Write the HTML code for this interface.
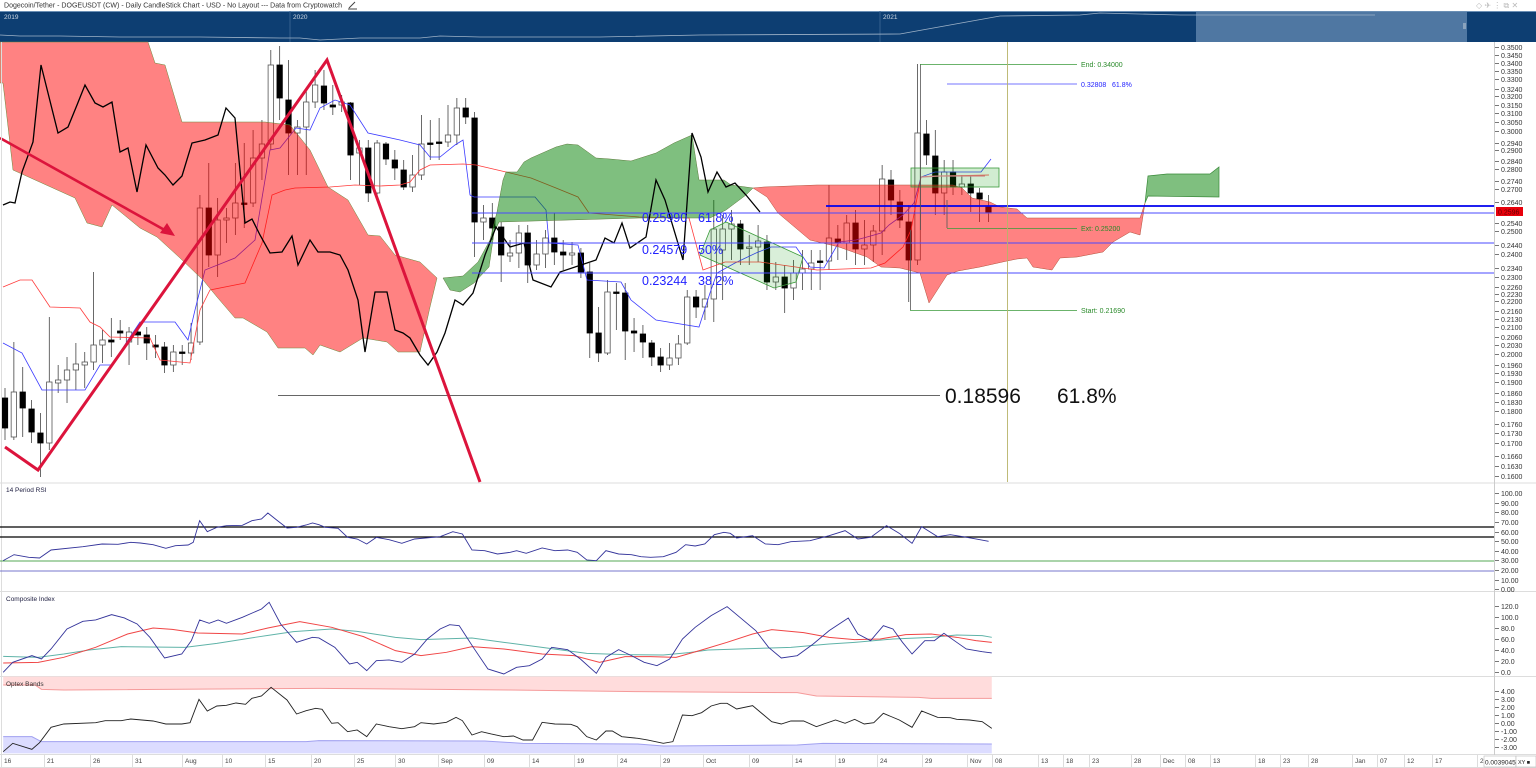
<!DOCTYPE html>
<html><head><meta charset="utf-8">
<style>
html,body{margin:0;padding:0;background:#fff;width:1536px;height:768px;overflow:hidden;font-family:"Liberation Sans",sans-serif;}
svg{position:absolute;left:0;top:0}
text{font-family:"Liberation Sans",sans-serif}
</style></head><body>
<svg id="s" width="1536" height="768" viewBox="0 0 1536 768" xmlns="http://www.w3.org/2000/svg">
<rect width="1536" height="768" fill="#fff"/>
<!-- title -->
<text x="4" y="7.5" font-size="7" fill="#333" textLength="338">Dogecoin/Tether - DOGEUSDT (CW) - Daily CandleStick Chart - USD - No Layout --- Data from Cryptowatch</text>
<path d="M349 8 L355 2 M348 9 L357 9" stroke="#444" stroke-width="1" fill="none"/>
<text x="1476" y="8" font-size="8" fill="#bbb">◇ ✈ ⋮ ⧉ ✕</text>
<!-- navigator -->
<rect x="0" y="11" width="1536" height="31" fill="#0d3e72"/>
<rect x="1196" y="11" width="271" height="31" fill="#4f77a2"/>
<line x1="0" y1="11.5" x2="1536" y2="11.5" stroke="#6a8fb5" stroke-width="1"/>
<line x1="290" y1="11" x2="290" y2="42" stroke="#35608e"/>
<line x1="880" y1="11" x2="880" y2="42" stroke="#35608e"/>
<text x="4" y="19" font-size="6.5" fill="#cfd8e3">2019</text>
<text x="293" y="19" font-size="6.5" fill="#cfd8e3">2020</text>
<text x="883" y="19" font-size="6.5" fill="#cfd8e3">2021</text>
<polyline fill="none" stroke="#9fb3c8" stroke-width="0.8" points="0,35 20,36 60,36 120,37 200,37 280,38 300,38 320,40 360,38 420,38 440,36 480,37 600,37 700,35 900,34 1000,16 1080,15 1100,13 1180,15 1250,15 1375,15"/>
<rect x="1463" y="23" width="3" height="6" fill="#8aa3bd"/>

<g id="main"></g>

<!-- panel separators -->
<line x1="0" y1="483" x2="1536" y2="483" stroke="#ddd"/>
<line x1="0" y1="591.5" x2="1536" y2="591.5" stroke="#ddd"/>
<line x1="0" y1="676.5" x2="1536" y2="676.5" stroke="#ddd"/>
<line x1="0" y1="754.5" x2="1536" y2="754.5" stroke="#ddd"/>
<line x1="1494.5" y1="42" x2="1494.5" y2="755" stroke="#ccc"/>
<line x1="1.5" y1="42" x2="1.5" y2="755" stroke="#ddd"/>

<!-- RSI -->
<text x="6" y="492" font-size="6.5" fill="#224">14 Period RSI</text>
<line x1="0" y1="527" x2="1494" y2="527" stroke="#000" stroke-width="1.2"/>
<line x1="0" y1="537" x2="1494" y2="537" stroke="#000" stroke-width="1.2"/>
<line x1="0" y1="561" x2="1494" y2="561" stroke="#5a5" stroke-width="1"/>
<line x1="0" y1="571" x2="1494" y2="571" stroke="#77c" stroke-width="1"/>
<g transform="translate(0,484) scale(0.6378,0.3333)">
<polyline vector-effect="non-scaling-stroke" fill="none" stroke="#33339a" stroke-width="0.9" points="5,230 22,212 45,220 62,222 80,198 130,188 160,180 185,181 205,175 220,177 240,182 260,193 275,185 295,183 303,175 313,110 325,143 340,130 355,125 380,124 395,110 410,105 420,87 435,110 450,132 465,130 480,123 490,117 500,122 510,130 530,133 545,160 560,165 575,180 590,160 610,167 630,178 650,165 690,158 710,143 725,150 740,198 760,200 780,210 800,205 810,200 825,208 850,192 870,200 890,198 905,205 920,228 935,230 950,200 970,210 990,212 1005,218 1020,220 1040,218 1060,205 1075,182 1090,186 1105,180 1120,152 1135,145 1145,148 1155,162 1180,155 1200,180 1220,182 1240,173 1270,170 1300,155 1325,140 1345,165 1365,160 1390,125 1410,148 1430,178 1445,128 1470,158 1490,152 1510,158 1530,165 1550,172"/>
</g>
<!-- Composite -->
<text x="6" y="601" font-size="6.5" fill="#224">Composite Index</text>
<g transform="translate(0,484) scale(0.6378,0.3333)">
<polyline vector-effect="non-scaling-stroke" fill="none" stroke="#5fb3a8" stroke-width="1" points="5,517 60,520 100,510 140,498 190,488 290,490 340,478 400,460 460,443 520,435 560,442 620,460 660,467 740,462 790,475 850,490 920,508 980,512 1040,513 1080,506 1110,498 1190,493 1240,490 1300,480 1340,475 1400,465 1460,460 1500,453 1540,455 1555,460"/>
<polyline vector-effect="non-scaling-stroke" fill="none" stroke="#f04545" stroke-width="1" points="5,537 60,535 100,520 150,490 200,450 240,432 270,436 310,447 380,450 420,432 470,413 520,430 570,458 620,500 660,515 700,505 740,488 790,495 850,510 900,515 940,535 980,518 1020,518 1060,520 1100,498 1140,475 1180,450 1210,437 1260,446 1300,460 1340,467 1380,465 1420,452 1460,450 1500,460 1530,470 1555,475"/>
<polyline vector-effect="non-scaling-stroke" fill="none" stroke="#33339a" stroke-width="0.9" points="5,565 20,535 50,515 65,525 80,495 105,435 130,412 150,408 175,392 195,402 215,420 235,460 258,522 285,510 300,470 313,408 328,418 342,408 355,418 380,400 410,375 422,355 440,420 465,475 490,460 500,462 525,490 548,540 560,535 575,560 590,530 610,528 630,535 650,510 670,465 690,435 705,422 720,425 742,490 765,555 790,570 810,550 830,545 850,525 865,490 890,497 910,525 935,568 950,520 970,497 990,515 1010,535 1030,545 1050,525 1070,465 1090,430 1115,395 1140,368 1160,400 1185,440 1205,490 1225,522 1250,515 1275,480 1300,440 1330,402 1345,450 1365,470 1385,425 1400,435 1415,475 1430,510 1450,470 1465,470 1480,448 1500,475 1515,495 1540,503 1555,507"/>
</g>
<!-- Optex -->
<g transform="translate(0,670) scale(0.6378,0.3333)">
<polygon fill="#ffdcdc" points="5,20 1555,20 1555,85 1460,85 1440,82 1280,78 1250,68 1000,65 800,60 500,55 100,60 65,58 55,45 5,45"/>
<polyline vector-effect="non-scaling-stroke" fill="none" stroke="#f59a9a" stroke-width="1" points="5,45 55,45 65,58 100,60 500,55 800,60 1000,65 1250,68 1280,78 1440,82 1460,85 1555,85"/>
<polygon fill="#dcdcff" points="5,200 50,200 65,215 480,215 500,212 760,213 820,220 1000,222 1040,228 1250,225 1290,220 1555,222 1555,250 5,250"/>
<polyline vector-effect="non-scaling-stroke" fill="none" stroke="#a0a0f0" stroke-width="1" points="5,200 50,200 65,215 480,215 500,212 760,213 820,220 1000,222 1040,228 1250,225 1290,220 1555,222"/>
<polyline vector-effect="non-scaling-stroke" fill="none" stroke="#222" stroke-width="0.9" points="5,245 20,220 50,238 62,218 80,172 100,162 150,158 165,152 190,152 205,147 240,153 260,162 285,162 298,158 312,88 325,123 340,108 355,106 370,99 385,103 395,85 410,78 425,52 450,90 465,132 480,122 495,115 505,118 520,160 530,158 545,185 560,180 575,200 590,162 610,170 630,176 650,170 660,158 680,162 700,157 715,142 725,152 740,195 755,185 770,192 790,200 805,198 820,210 835,210 850,157 870,162 895,163 905,170 920,200 935,210 950,183 960,183 975,200 1000,205 1015,210 1040,220 1055,215 1070,135 1085,137 1100,128 1115,108 1130,100 1140,100 1155,117 1180,107 1210,155 1225,162 1240,153 1260,153 1280,170 1310,150 1325,160 1340,148 1355,162 1370,158 1385,130 1410,150 1430,172 1445,123 1470,142 1490,143 1500,148 1520,150 1540,155 1555,175"/>
</g>
<text x="6" y="686" font-size="6.5" fill="#333">Optex Bands</text>

<!-- right axis -->
<g font-size="7" fill="#333" stroke="none" id="axis">
<text x="1501" y="50">0.3500</text><text x="1501" y="58">0.3450</text><text x="1501" y="66">0.3400</text><text x="1501" y="74">0.3350</text><text x="1501" y="82">0.3300</text><text x="1501" y="92">0.3240</text><text x="1501" y="99">0.3200</text><text x="1501" y="108">0.3150</text><text x="1501" y="116">0.3100</text><text x="1501" y="125">0.3050</text><text x="1501" y="134">0.3000</text><text x="1501" y="146">0.2940</text><text x="1501" y="153">0.2900</text><text x="1501" y="164">0.2840</text><text x="1501" y="172">0.2800</text><text x="1501" y="184">0.2740</text><text x="1501" y="192">0.2700</text><text x="1501" y="205">0.2640</text><text x="1501" y="226">0.2540</text><text x="1501" y="234">0.2500</text><text x="1501" y="248">0.2440</text><text x="1501" y="257">0.2400</text><text x="1501" y="271">0.2340</text><text x="1501" y="280">0.2300</text><text x="1501" y="290">0.2260</text><text x="1501" y="297">0.2230</text><text x="1501" y="304">0.2200</text><text x="1501" y="314">0.2160</text><text x="1501" y="322">0.2130</text><text x="1501" y="330">0.2100</text><text x="1501" y="340">0.2060</text><text x="1501" y="348">0.2030</text><text x="1501" y="357">0.2000</text><text x="1501" y="368">0.1960</text><text x="1501" y="376">0.1930</text><text x="1501" y="385">0.1900</text><text x="1501" y="396">0.1860</text><text x="1501" y="405">0.1830</text><text x="1501" y="414">0.1800</text><text x="1501" y="427">0.1760</text><text x="1501" y="436">0.1730</text><text x="1501" y="446">0.1700</text><text x="1501" y="459">0.1660</text><text x="1501" y="469">0.1630</text><text x="1501" y="479">0.1600</text>
<text x="1501" y="496">100.00</text><text x="1501" y="506">90.00</text><text x="1501" y="515">80.00</text><text x="1501" y="525">70.00</text><text x="1501" y="535">60.00</text><text x="1501" y="544">50.00</text><text x="1501" y="554">40.00</text><text x="1501" y="563">30.00</text><text x="1501" y="573">20.00</text><text x="1501" y="583">10.00</text><text x="1501" y="592">0.00</text>
<text x="1501" y="609">120.0</text><text x="1501" y="620">100.0</text><text x="1501" y="631">80.0</text><text x="1501" y="642">60.0</text><text x="1501" y="653">40.0</text><text x="1501" y="664">20.0</text><text x="1501" y="675">0.0</text>
<text x="1501" y="694">4.00</text><text x="1501" y="702">3.00</text><text x="1501" y="710">2.00</text><text x="1501" y="718">1.00</text><text x="1501" y="726">0.00</text><text x="1501" y="734">-1.00</text><text x="1501" y="742">-2.00</text><text x="1501" y="750">-3.00</text>
</g>
<rect x="1496" y="207" width="27" height="9" fill="#e8000b"/>
<text x="1498" y="214.5" font-size="7" fill="#600">0.2596</text>

<!-- date axis -->
<g font-size="6.5" fill="#444" id="dates">
<text x="4" y="763">16</text><text x="47" y="763">21</text><text x="93" y="763">26</text><text x="135" y="763">31</text><text x="185" y="763">Aug</text><text x="225" y="763">10</text><text x="268" y="763">15</text><text x="314" y="763">20</text><text x="357" y="763">25</text><text x="398" y="763">30</text><text x="441" y="763">Sep</text><text x="487" y="763">09</text><text x="532" y="763">14</text><text x="577" y="763">19</text><text x="620" y="763">24</text><text x="663" y="763">29</text><text x="706" y="763">Oct</text><text x="752" y="763">09</text><text x="795" y="763">14</text><text x="838" y="763">19</text><text x="880" y="763">24</text><text x="925" y="763">29</text><text x="970" y="763">Nov</text><text x="995" y="763">08</text><text x="1041" y="763">13</text><text x="1066" y="763">18</text><text x="1092" y="763">23</text><text x="1134" y="763">28</text><text x="1163" y="763">Dec</text><text x="1188" y="763">08</text><text x="1213" y="763">13</text><text x="1258" y="763">18</text><text x="1283" y="763">23</text><text x="1311" y="763">28</text><text x="1355" y="763">Jan</text><text x="1380" y="763">07</text><text x="1407" y="763">12</text><text x="1435" y="763">17</text><text x="1480" y="763">2</text>
</g>
<g stroke="#ddd" id="dsep"></g>
<line x1="0" y1="767.5" x2="1536" y2="767.5" stroke="#ddd"/>
<rect x="1484" y="756" width="32" height="11" fill="#fff" stroke="#bbb" stroke-width="0.6"/>
<text x="1485" y="764.5" font-size="6.5" fill="#222">0.0039045</text>
<rect x="1516" y="756" width="20" height="11" fill="#fff" stroke="#bbb" stroke-width="0.6"/>
<text x="1518" y="764" font-size="5.5" fill="#222">XY ■</text>
</svg>
<script>
(function(){
var NS="http://www.w3.org/2000/svg";
var g=document.getElementById("main");
function el(t,a,p){var e=document.createElementNS(NS,t);for(var k in a)e.setAttribute(k,a[k]);(p||g).appendChild(e);return e;}
function tx(s,a){var t=el("text",a);t.textContent=s;return t;}
var ds=document.getElementById("dsep");
document.querySelectorAll("#dates text").forEach(function(t){var x=+t.getAttribute("x")-2.5;el("line",{x1:x,y1:755,x2:x,y2:767},ds);});
document.querySelectorAll("#axis text").forEach(function(t){var y=+t.getAttribute("y")-2.5;el("line",{x1:1494,y1:y,x2:1499,y2:y,stroke:"#555","stroke-width":0.8});});
function pl(pts,stroke,w){return el("polyline",{points:pts,fill:"none",stroke:stroke,"stroke-width":w||1});}
var C=[[1,398,428,388,440],[0,392,437,342,440],[1,392,408,367,437],[1,409,432,400,443],[1,433,443,413,477],[0,382,443,317,450],[0,380,383,365,393],[0,370,380,357,403],[0,364,370,343,390],[0,362,365,352,388],[0,345,362,272,370],[0,340,345,330,363],[1,340,342,318,357],[1,331,333,320,340],[0,332,342,327,365],[1,332,335,325,345],[1,335,343,327,360],[1,345,347,335,358],[1,347,365,342,373],[0,352,365,345,372],[1,352,353,345,365],[0,343,353,323,360],[0,208,342,195,345],[1,208,255,163,267],[0,220,255,198,277],[0,218,220,208,243],[0,203,218,163,235],[1,203,204,143,228],[0,158,203,130,207],[0,144,158,120,180],[0,65,144,50,150],[1,65,98,46,120],[1,100,133,60,175],[0,127,133,120,175],[0,102,127,90,175],[0,85,102,70,108],[1,86,103,70,110],[1,105,107,85,115],[0,102,105,95,112],[1,103,155,102,180],[0,148,153,140,185],[1,148,193,140,202],[0,143,193,140,197],[1,144,159,142,165],[1,160,168,150,180],[1,170,187,160,190],[0,175,187,155,192],[0,144,175,115,180],[1,143,144,120,160],[1,142,143,118,160],[0,135,142,105,147],[0,108,135,98,145],[1,108,117,98,124],[1,118,222,112,257],[0,218,222,205,240],[1,218,228,203,240],[1,227,255,222,282],[0,253,256,240,262],[0,233,253,225,268],[1,233,265,225,283],[0,254,265,240,270],[0,238,254,230,268],[1,238,252,213,265],[1,252,255,240,270],[0,253,255,242,265],[1,253,272,248,278],[1,272,333,263,358],[1,333,353,307,362],[0,292,353,280,355],[1,292,293,283,330],[1,293,331,283,360],[1,331,333,318,352],[1,334,342,325,358],[1,343,357,340,366],[1,357,365,348,372],[0,358,365,343,370],[0,344,358,335,365],[0,297,343,290,345],[1,297,307,290,318],[0,299,307,285,320],[0,229,299,200,322],[0,229,250,215,300],[0,224,229,210,260],[1,224,249,220,265],[0,247,248,235,265],[0,241,247,225,262],[1,242,282,235,290],[0,277,282,262,290],[1,277,288,265,313],[0,273,288,260,300],[0,269,273,250,290],[0,263,269,250,290],[1,261,262,250,290],[0,238,261,185,270],[1,239,243,225,260],[0,223,243,215,260],[1,223,249,210,265],[0,245,249,220,265],[0,231,245,225,262],[0,179,231,165,255],[1,180,200,170,215],[1,202,220,190,228],[1,222,260,205,302],[0,133,260,64,265],[1,134,155,120,165],[1,156,193,130,215],[0,172,193,160,215],[1,172,187,160,195],[0,184,187,175,195],[1,184,193,175,212],[1,193,199,188,222],[1,207,212,195,222]];
C.forEach(function(c,i){var x=5+i*8.86;el("line",{x1:x,y1:c[3],x2:x,y2:c[4],stroke:"#444","stroke-width":0.8});var h=Math.max(1.5,c[2]-c[1]);el("rect",{x:x-2.7,y:c[1],width:5.4,height:h,fill:c[0]?"#000":"#fff",stroke:c[0]?"#000":"#555","stroke-width":0.8});});
pl("3,343 22,353 42,390 85,390 100,365 112,365 128,340 140,322 175,322 188,340 195,310 205,270 235,258 255,240 270,150 280,148 296,128 310,130 320,108 335,100 350,105 368,133 400,140 420,145 430,157 440,157 455,145 463,140 470,195 474,197 535,197 546,210 549,243 578,245 587,280 621,282 631,300 656,320 699,327 710,293 717,273 735,263 756,253 771,247 796,247 810,267 824,268 839,242 856,240 867,237 881,233 889,225 903,215 914,203 921,177 935,172 981,172 991,159","#3a3aff",0.8);
pl("3,287 20,280 32,280 50,307 80,308 90,322 100,327 110,337 150,338 160,360 190,363 200,310 210,290 235,285 245,283 262,243 272,195 285,190 295,188 330,187 355,185 380,186 400,185 410,182 420,170 430,165 463,164 476,165 506,172 531,178 556,188 578,197 589,213 639,217 689,218 703,270 725,262 760,262 817,270 871,268 885,263 903,247 911,230 921,177 935,176 989,175","#ff3b3b",0.8);
var R="rgba(255,0,0,0.49)",G="rgba(0,128,0,0.5)";
el("polygon",{fill:R,stroke:"#6a8a3a","stroke-width":0.5,points:"0,42 148,42 155,63 165,65 182,122 265,122 290,125 310,150 328,187 348,200 368,235 380,236 395,255 420,262 437,278 430,307 420,352 398,352 387,342 363,338 340,352 320,345 313,355 305,348 278,348 267,332 243,318 235,318 217,297 203,280 180,258 157,237 140,228 112,205 102,227 87,223 75,198 13,170 3,83 0,83"});
el("polygon",{fill:G,stroke:"#5a7a3a","stroke-width":0.5,points:"443,278 463,276 478,262 490,240 497,212 503,180 506,172 517,172 524,162 531,158 556,147 567,144 578,145 596,158 610,159 631,161 656,153 674,143 692,135 699,180 724,180 731,185 753,188 746,195 726,210 710,218 639,218 499,222 494,233 489,267 474,283 460,292 450,290"});
el("polygon",{fill:R,stroke:"#b0503a","stroke-width":0.5,points:"753,188 764,187 817,185 953,185 962,188 972,198 990,202 1000,207 1017,209 1027,218 1140,218 1145,203 1140,235 1130,232 1113,242 1103,252 1077,257 1060,258 1052,270 1033,267 1027,258 1017,259 1007,261 980,267 958,271 947,275 929,303 920,273 900,268 881,267 867,257 839,247 810,240 778,213 767,197"});
el("polygon",{fill:G,stroke:"#3a8a3a","stroke-width":0.7,points:"1145,203 1148,176 1167,174 1210,174 1219,167 1219,197 1148,196"});
el("polygon",{fill:"rgba(0,150,0,0.15)",stroke:"#3a9a3a","stroke-width":0.8,points:"700,255 710,230 726,222 803,257 796,282 774,288"});
el("rect",{x:911,y:168,width:88,height:19,fill:"rgba(0,150,0,0.18)",stroke:"#3a9a3a","stroke-width":0.8});
pl("921,177 940,176 985,176","#c88",1.2);
pl("3,205 10,202 15,203 22,172 33,142 41,65 58,133 68,127 77,105 85,85 95,103 103,107 112,102 120,152 128,148 137,192 146,145 158,168 165,175 173,185 182,176 192,143 205,140 218,135 226,108 235,118 245,223 252,219 260,235 270,253 282,252 292,236 298,265 310,240 318,252 330,252 340,255 348,270 358,300 365,352 375,292 387,292 395,330 403,333 410,338 420,355 428,365 437,352 445,333 455,300 463,305 473,293 485,255 496,227 510,247 524,243 533,280 551,287 560,272 596,260 605,238 614,243 622,223 630,248 646,237 656,180 665,200 683,260 692,133 701,157 708,192 717,172 726,187 735,183 746,195 760,212","#000",1.3);
el("line",{x1:472,y1:213,x2:1494,y2:213,stroke:"#4848ff","stroke-width":0.9});
el("line",{x1:472,y1:243,x2:1494,y2:243,stroke:"#4848ff","stroke-width":0.9});
el("line",{x1:472,y1:273,x2:1494,y2:273,stroke:"#4848ff","stroke-width":0.9});
el("line",{x1:826,y1:206,x2:1494,y2:206,stroke:"#0000ee","stroke-width":1.8});
tx("0.25990",{x:642,y:222,"font-size":12.5,fill:"#2222ff"});
tx("0.24579",{x:642,y:254,"font-size":12.5,fill:"#2222ff"});
tx("0.23244",{x:642,y:285,"font-size":12.5,fill:"#2222ff"});
tx("61.8%",{x:698,y:222,"font-size":12.5,fill:"#2222ff"});
tx("50%",{x:698,y:254,"font-size":12.5,fill:"#2222ff"});
tx("38.2%",{x:698,y:285,"font-size":12.5,fill:"#2222ff"});
var gr="#3a9a3a";
el("line",{x1:920.5,y1:64,x2:920.5,y2:230,stroke:"#555","stroke-width":0.8});
el("line",{x1:910.5,y1:230,x2:910.5,y2:310,stroke:"#555","stroke-width":0.8});
el("line",{x1:920,y1:64.5,x2:1077,y2:64.5,stroke:gr,"stroke-width":0.8});
el("line",{x1:910,y1:310.5,x2:1077,y2:310.5,stroke:gr,"stroke-width":0.8});
el("line",{x1:947,y1:228.5,x2:1077,y2:228.5,stroke:gr,"stroke-width":0.8});
el("line",{x1:947,y1:84,x2:1077,y2:84,stroke:"#4848ff","stroke-width":0.8});
el("line",{x1:947,y1:200,x2:947,y2:228,stroke:"#555","stroke-width":0.8});
tx("End: 0.34000",{x:1081,y:67,"font-size":7,fill:"#2a8a2a"});
tx("0.32808",{x:1081,y:87,"font-size":7,fill:"#2222ff"});
tx("61.8%",{x:1112,y:87,"font-size":7,fill:"#2222ff"});
tx("Ext: 0.25200",{x:1081,y:231,"font-size":7,fill:"#2a8a2a"});
tx("Start: 0.21690",{x:1081,y:313,"font-size":7,fill:"#2a8a2a"});
el("line",{x1:1007.5,y1:42,x2:1007.5,y2:482,stroke:"#b8b46a","stroke-width":0.9});
el("line",{x1:278,y1:395.5,x2:940,y2:395.5,stroke:"#333","stroke-width":0.8});
tx("0.18596",{x:945,y:403,"font-size":21,fill:"#111"});
tx("61.8%",{x:1057,y:403,"font-size":21,fill:"#111"});
var rc="#dc143c";
el("polyline",{points:"5,447 38,470 327,60 480,482",fill:"none",stroke:rc,"stroke-width":3,"stroke-linejoin":"miter"});
el("line",{x1:0,y1:138,x2:170,y2:233,stroke:rc,"stroke-width":2.6});
el("polygon",{points:"175,236 160,233 167,223",fill:rc});
})();
</script>
</body></html>
